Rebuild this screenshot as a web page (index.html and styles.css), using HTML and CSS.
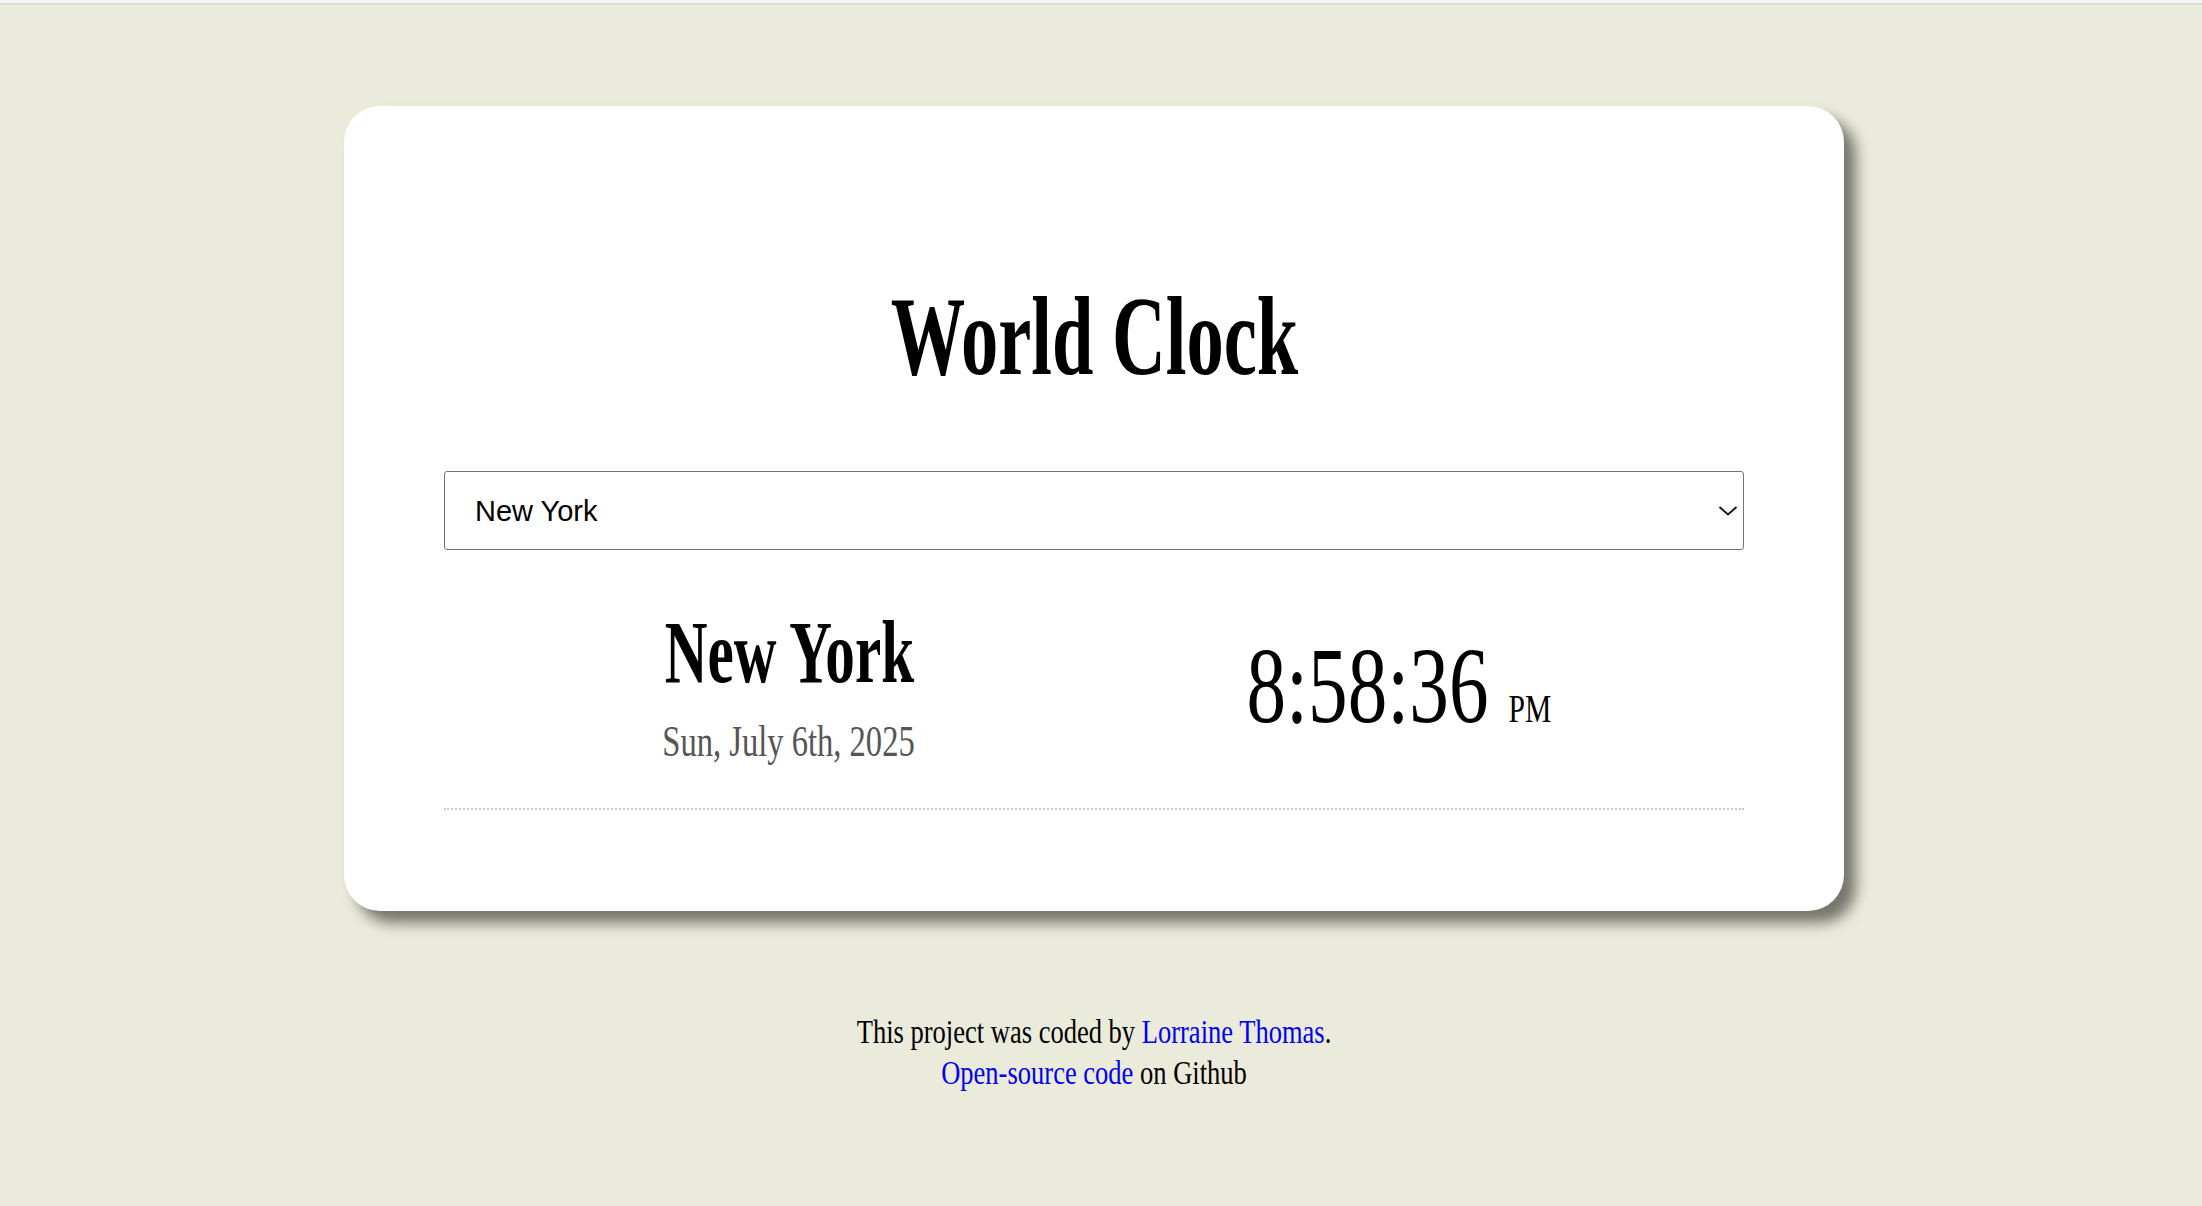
FILE: index.html
```html
<!DOCTYPE html>
<html lang="en">
<head>
<meta charset="utf-8">
<title>World Clock</title>
<link rel="stylesheet" href="styles.css">
</head>
<body>
<div class="chrome"></div>
<main class="page">
  <section class="card">
    <h1 class="title"><span class="cond-bold">World Clock</span></h1>
    <div class="select-wrap">
      <select class="city-select">
        <option>New York</option>
        <option>London</option>
        <option>Paris</option>
        <option>Tokyo</option>
        <option>Sydney</option>
      </select>
      <svg class="chev" width="20" height="12" viewBox="0 0 20 12"><path d="M1.5 2 L10 9.5 L18.5 2" fill="none" stroke="#1a1a1a" stroke-width="2"/></svg>
    </div>
    <div class="city-row">
      <div class="city-col">
        <div class="city-name"><span class="cond-bold">New York</span></div>
        <div class="city-date"><span class="cond-reg">Sun, July 6th, 2025</span></div>
      </div>
      <div class="time-col">
        <span class="time">8:58:36<span class="ampm">PM</span></span>
      </div>
    </div>
  </section>
  <footer class="footer">
    <p class="credits">This project was coded by <a href="#">Lorraine Thomas</a>.<br><a href="#">Open-source code</a> on Github</p>
  </footer>
</main>
</body>
</html>
```
FILE: styles.css
```css
html, body {
  margin: 0;
  padding: 0;
}
body {
  background: #ebebdb;
  min-height: 100vh;
  font-family: "Liberation Serif", "Times New Roman", serif;
  color: #000;
}
.chrome {
  height: 3px;
  background: #f3f3f1;
  border-bottom: 2px solid #dcdcdc;
}
.page {
  padding-right: 14px;
  padding-top: 101px;
}
.card {
  width: 1500px;
  box-sizing: border-box;
  margin: 0 auto;
  background: #fff;
  border-radius: 36px;
  padding: 100px 100px 101px;
  box-shadow: 12px 12px 14px rgba(0, 0, 0, 0.5);
}
.title {
  margin: 74px 0 79px;
  font-size: 112px;
  line-height: 1;
  font-weight: bold;
  text-align: center;
}
.cond-bold {
  display: inline-block;
  transform: scaleX(0.665);
  white-space: nowrap;
}
.cond-reg {
  display: inline-block;
  transform: scaleX(0.74);
  white-space: nowrap;
}
.select-wrap {
  position: relative;
}
.city-select {
  display: block;
  width: 100%;
  height: 79px;
  box-sizing: border-box;
  -webkit-appearance: none;
  appearance: none;
  background: #fff;
  border: 1px solid #747474;
  border-radius: 3px;
  padding: 0 60px 0 30px;
  font-family: "Liberation Sans", Arial, sans-serif;
  font-size: 29px;
  color: #000;
}
.chev {
  position: absolute;
  right: 6px;
  top: 34px;
  pointer-events: none;
}
.city-row {
  display: grid;
  grid-template-columns: 610px 610px;
  justify-content: center;
  align-items: center;
  margin-top: 58px;
  padding-bottom: 44px;
  border-bottom: 2px dotted #d2c6cc;
}
.city-col, .time-col {
  text-align: center;
}
.city-name {
  font-size: 89px;
  line-height: 1;
  font-weight: bold;
}
.city-date {
  margin-top: 23px;
  font-size: 44px;
  line-height: 1;
  color: #555;
}
.time {
  display: inline-block;
  font-size: 107px;
  line-height: 1;
  transform: scaleX(0.74);
  white-space: nowrap;
}
.ampm {
  font-size: 40px;
  margin-left: 27px;
}
.footer {
  margin-top: 100px;
  text-align: center;
}
.credits {
  margin: 0;
  font-size: 34px;
  line-height: 41px;
  transform: scaleX(0.78);
}
.credits a {
  color: #0000ee;
  text-decoration: none;
}
```
